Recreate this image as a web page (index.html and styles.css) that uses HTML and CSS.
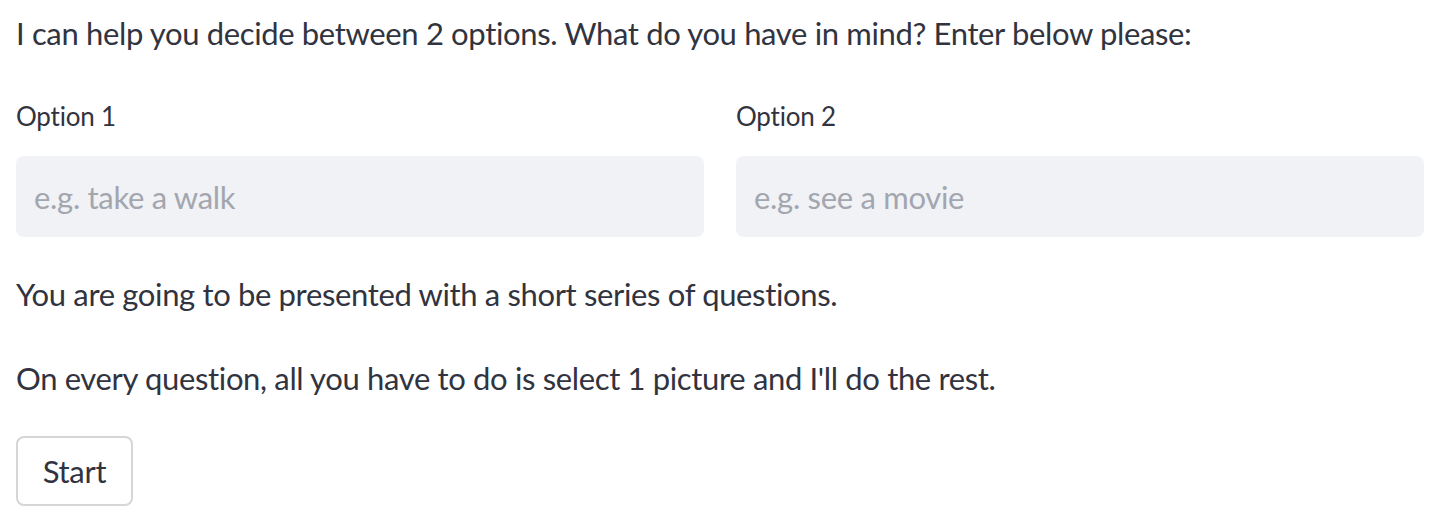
FILE: index.html
```html
<!DOCTYPE html>
<html lang="en">
<head>
<meta charset="utf-8">
<title>Decide</title>
<link rel="stylesheet" href="styles.css">
</head>
<body>
<main class="page">
  <p class="text intro">I can help you decide between 2 options. What do you have in mind? Enter below please:</p>
  <div class="columns">
    <div class="field">
      <label class="label" for="o1">Option 1</label>
      <input class="input" id="o1" type="text" placeholder="e.g. take a walk">
    </div>
    <div class="field">
      <label class="label" for="o2">Option 2</label>
      <input class="input" id="o2" type="text" placeholder="e.g. see a movie">
    </div>
  </div>
  <p class="text p2">You are going to be presented with a short series of questions.</p>
  <p class="text p3">On every question, all you have to do is select 1 picture and I'll do the rest.</p>
  <button class="btn" type="button">Start</button>
</main>
</body>
</html>
```
FILE: styles.css
```css
* { box-sizing: border-box; }
html, body { margin: 0; padding: 0; background: #ffffff; }
body {
  font-family: Lato, "Open Sans", sans-serif;
  color: #31333f;
  width: 1444px;
  height: 520px;
  overflow: hidden;
}
.page {
  padding: 8px 20px 0 16px;
  display: flex;
  flex-direction: column;
  align-items: flex-start;
}
.text {
  margin: 0;
  font-size: 31px;
  line-height: 50px;
  letter-spacing: -0.35px;
}
.columns {
  display: grid;
  grid-template-columns: 688px 688px;
  column-gap: 32px;
  margin-top: 38px;
  width: 100%;
}
.field { display: flex; flex-direction: column; }
.label {
  font-size: 26px;
  line-height: 40px;
  letter-spacing: -0.2px;
  margin-bottom: 20px;
}
.input {
  height: 81px;
  border: none;
  border-radius: 8px;
  background: #f0f2f6;
  padding: 0 18px;
  font-family: inherit;
  font-size: 31px;
  letter-spacing: -0.3px;
  color: #31333f;
  outline: none;
}
.input::placeholder { color: #a3a6ae; opacity: 1; }
.p2 { margin-top: 32px; }
.p3 { margin-top: 34px; }
.btn {
  margin-top: 33px;
  width: 117px;
  height: 70px;
  border: 2px solid #d6d6d9;
  border-radius: 8px;
  background: #ffffff;
  font-family: inherit;
  font-size: 31px;
  letter-spacing: -0.3px;
  color: #31333f;
  padding: 0;
}
```
